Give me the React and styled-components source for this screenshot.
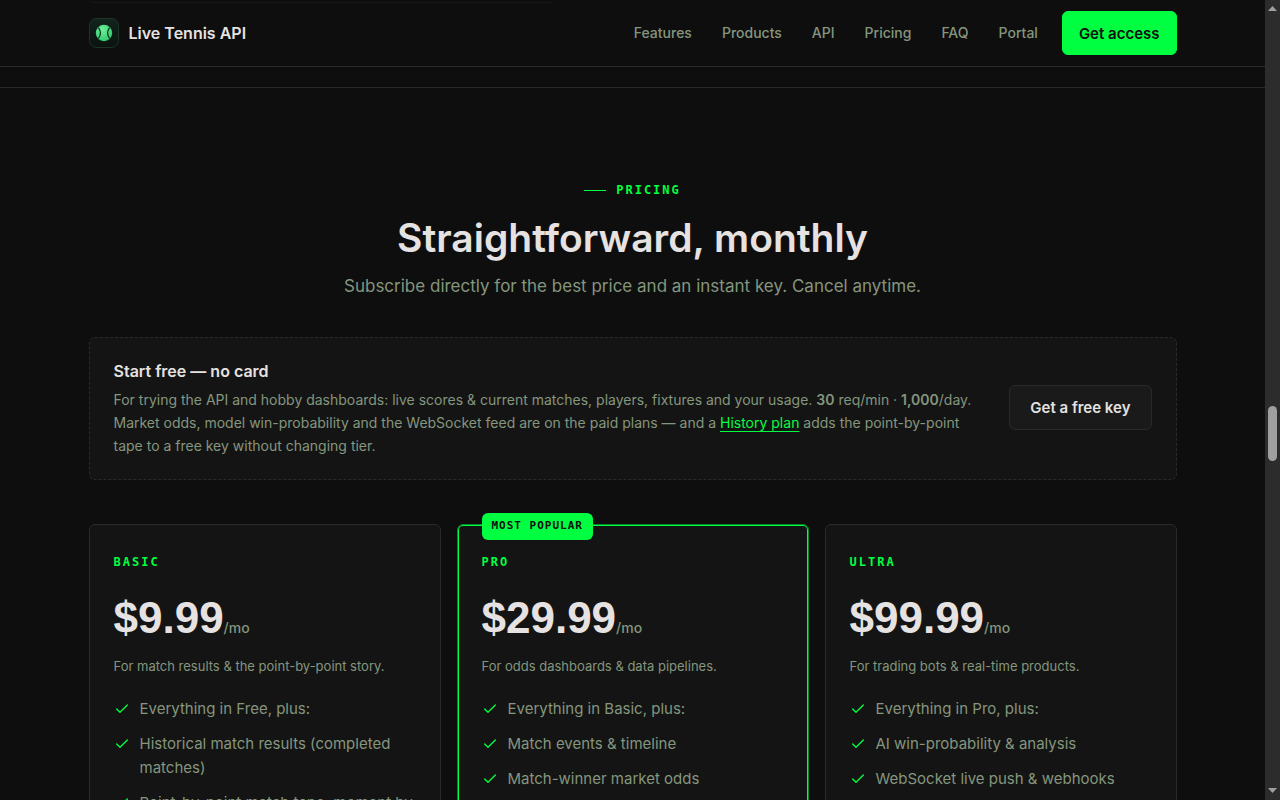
import React from 'react'
import styled, { createGlobalStyle } from 'styled-components'
import { Check } from 'lucide-react'

const GlobalStyle = createGlobalStyle`
  * {
    box-sizing: border-box;
  }

  body {
    margin: 0;
    background: #0e0e0e;
    color: #e5e2e1;
    font-family: Inter, sans-serif;
    font-size: 16px;
    line-height: 24px;
  }

  h1, h2, h3, p, ul {
    margin: 0;
    padding: 0;
  }
`

const mono = '"DejaVu Sans Mono", monospace'

const Window = styled.div`
  display: flex;
  height: 100vh;
  overflow: hidden;
`

const Page = styled.div`
  flex: 1;
  min-width: 0;
  overflow: hidden;
`

const Container = styled.div`
  max-width: 1136px;
  margin: 0 auto;
  padding: 0 24px;
`

const Header = styled.header`
  border-bottom: 1px solid #2a2a2a;
`

const HeaderRow = styled(Container)`
  position: relative;
  display: flex;
  align-items: center;
  justify-content: space-between;
  height: 66px;
`

/* bottom edge of the panel that has scrolled under the header */
const ScrolledPanel = styled.div`
  position: absolute;
  top: 0;
  left: 24px;
  width: 41%;
  height: 3px;
  border-bottom: 1px solid #171717;
  border-radius: 0 0 6px 6px;
`

const Brand = styled.a`
  display: flex;
  align-items: center;
  gap: 10px;
  color: #e5e2e1;
  font-size: 16px;
  font-weight: 600;
  text-decoration: none;
`

const Nav = styled.nav`
  display: flex;
  align-items: center;
  gap: 24px;
`

const NavLinks = styled.div`
  display: flex;
  gap: 30px;
`

const NavLink = styled.a`
  color: #84967e;
  font-size: 14px;
  font-weight: 500;
  text-decoration: none;
`

const ButtonLink = styled.a`
  flex-shrink: 0;
  padding: ${props => (props.$primary ? '11px 16px 9px' : '11px 20px 10px')};
  border: 1px solid ${props => (props.$primary ? '#00ff41' : '#2a2a2a')};
  border-radius: 6px;
  background: ${props => (props.$primary ? '#00ff41' : '#1a1a1a')};
  color: ${props => (props.$primary ? '#0e0e0e' : '#e5e2e1')};
  font-size: 15px;
  font-weight: 600;
  line-height: 22px;
  text-decoration: none;
`

const Strip = styled.div`
  height: 21px;
  border-bottom: 1px solid #2a2a2a;
`

const Pricing = styled.section`
  padding: 90px 0;
`

const SectionHead = styled.div`
  display: flex;
  flex-direction: column;
  align-items: center;
  margin-bottom: 37px;
  text-align: center;
`

const Label = styled.p`
  display: flex;
  align-items: center;
  gap: 10px;
  color: #00ff41;
  font-family: ${mono};
  font-size: 12px;
  font-weight: 700;
  letter-spacing: 2px;
  text-transform: uppercase;
`

const Eyebrow = styled(Label)`
  &::before {
    content: '';
    width: 22px;
    height: 1px;
    background: #00ff41;
  }
`

const Title = styled.h2`
  margin: 13px 0 11px;
  font-size: 39px;
  font-weight: 600;
  line-height: 46px;
`

const Subtitle = styled.p`
  color: #84967e;
  font-size: 17px;
  line-height: 28px;
`

const FreeCard = styled.div`
  display: flex;
  align-items: center;
  justify-content: space-between;
  gap: 24px;
  margin-bottom: 44px;
  padding: 20px 24px 22px;
  border: 1px dashed #2a2a2a;
  border-radius: 6px;
  background: #141414;
`

const FreeTitle = styled.h3`
  margin-bottom: 3px;
  font-size: 16px;
  font-weight: 600;
  line-height: 27px;
`

const FreeText = styled.p`
  color: #84967e;
  font-size: 14px;
  line-height: 23px;

  strong {
    font-weight: 600;
  }

  a {
    color: #00ff41;
    text-underline-offset: 3px;
  }
`

const Plans = styled.div`
  display: grid;
  grid-template-columns: repeat(3, minmax(0, 1fr));
  gap: 16px;
`

const PlanCard = styled.article`
  position: relative;
  padding: 25px 24px;
  border: 1px solid ${props => (props.$featured ? '#07872a' : '#2a2a2a')};
  border-radius: 6px;
  background: #141414;
  box-shadow: ${props => (props.$featured ? 'inset 0 0 0 1px #00ff41' : 'none')};
`

const Badge = styled.span`
  position: absolute;
  top: -12px;
  left: 24px;
  padding: 1px 10px 3px;
  border-radius: 6px;
  background: #00ff41;
  color: #0e0e0e;
  font-family: ${mono};
  font-size: 11px;
  font-weight: 700;
  line-height: 23px;
  letter-spacing: 1px;
`

const Price = styled.p`
  margin: 17px 0 9px;
  font-family: "Liberation Sans", Arial, sans-serif;
  font-size: 44px;
  font-weight: 700;
  line-height: 54px;

  span {
    color: #84967e;
    font-family: Inter, sans-serif;
    font-size: 14px;
    font-weight: 500;
    line-height: 14px;
  }
`

const PlanText = styled.p`
  color: #84967e;
  font-size: 13px;
`

const Features = styled.ul`
  display: flex;
  flex-direction: column;
  gap: 11px;
  margin-top: 19px;
  list-style: none;
`

const Feature = styled.li`
  display: flex;
  gap: 10px;
  color: #84967e;
  font-size: 15px;

  svg {
    flex-shrink: 0;
    margin-top: 4px;
    color: #00ff41;
  }
`

const ScrollTrack = styled.div`
  display: flex;
  flex-direction: column;
  align-items: center;
  justify-content: space-between;
  width: 15px;
  padding: 6px 0 7px;
  background: #2c2c2c;
`

const ScrollThumb = styled.div`
  width: 9px;
  height: 55px;
  margin-top: 68px;
  border-radius: 5px;
  background: #9f9f9f;
`

const links = ['Features', 'Products', 'API', 'Pricing', 'FAQ', 'Portal']

const plans = [
  {
    name: 'Basic',
    price: '$9.99',
    text: 'For match results & the point-by-point story.',
    features: [
      'Everything in Free, plus:',
      'Historical match results (completed matches)',
      'Point-by-point match tape, moment by moment',
    ],
  },
  {
    name: 'Pro',
    price: '$29.99',
    featured: true,
    text: 'For odds dashboards & data pipelines.',
    features: ['Everything in Basic, plus:', 'Match events & timeline', 'Match-winner market odds'],
  },
  {
    name: 'Ultra',
    price: '$99.99',
    text: 'For trading bots & real-time products.',
    features: ['Everything in Pro, plus:', 'AI win-probability & analysis', 'WebSocket live push & webhooks'],
  },
]

const Logo = () => (
  <svg width="30" height="30" viewBox="0 0 30 30" aria-hidden="true">
    <defs>
      <linearGradient id="tile" x1="0" y1="0" x2="0" y2="1">
        <stop offset="0" stopColor="#12241b" />
        <stop offset="1" stopColor="#0a130f" />
      </linearGradient>
      <radialGradient id="ball" cx="0.4" cy="0.3" r="0.8">
        <stop offset="0" stopColor="#6cf09a" />
        <stop offset="1" stopColor="#2cc468" />
      </radialGradient>
    </defs>
    <rect x="0.5" y="0.5" width="29" height="29" rx="7" fill="url(#tile)" stroke="#1c3627" />
    <circle cx="15" cy="15" r="8.2" fill="url(#ball)" />
    <path d="M9.4 9.6Q13.4 15 9.4 20.4M20.6 9.6Q16.6 15 20.6 20.4" fill="none" stroke="#0c2a18" strokeWidth="1.2" />
  </svg>
)

const Scrollbar = () => (
  <ScrollTrack aria-hidden="true">
    <svg width="9" height="5" viewBox="0 0 9 5">
      <path d="M4.5 0 9 5H0z" fill="#9f9f9f" />
    </svg>
    <ScrollThumb />
    <svg width="9" height="5" viewBox="0 0 9 5">
      <path d="M0 0H9L4.5 5z" fill="#9f9f9f" />
    </svg>
  </ScrollTrack>
)

const Plan = ({ plan }) => (
  <PlanCard $featured={plan.featured}>
    {plan.featured && <Badge>MOST POPULAR</Badge>}
    <Label as="h3">{plan.name}</Label>
    <Price>
      {plan.price}
      <span>/mo</span>
    </Price>
    <PlanText>{plan.text}</PlanText>
    <Features>
      {plan.features.map(feature => (
        <Feature key={feature}>
          <Check size={16} />
          {feature}
        </Feature>
      ))}
    </Features>
  </PlanCard>
)

const App = () => (
  <Window>
    <GlobalStyle />
    <Page>
      <Header>
        <HeaderRow>
          <ScrolledPanel />
          <Brand href="#top">
            <Logo />
            Live Tennis API
          </Brand>
          <Nav>
            <NavLinks>
              {links.map(link => (
                <NavLink key={link} href={`#${link.toLowerCase()}`}>{link}</NavLink>
              ))}
            </NavLinks>
            <ButtonLink $primary href="#access">Get access</ButtonLink>
          </Nav>
        </HeaderRow>
      </Header>
      <Strip />
      <Pricing id="pricing">
        <Container>
          <SectionHead>
            <Eyebrow>Pricing</Eyebrow>
            <Title>Straightforward, monthly</Title>
            <Subtitle>Subscribe directly for the best price and an instant key. Cancel anytime.</Subtitle>
          </SectionHead>
          <FreeCard>
            <div>
              <FreeTitle>Start free — no card</FreeTitle>
              <FreeText>
                For trying the API and hobby dashboards: live scores &amp; current matches, players, fixtures and your
                usage. <strong>30</strong> req/min · <strong>1,000</strong>/day. Market odds, model win-probability and
                the WebSocket feed are on the paid plans — and a <a href="#history">History plan</a> adds the
                point-by-point tape to a free key without changing tier.
              </FreeText>
            </div>
            <ButtonLink href="#free">Get a free key</ButtonLink>
          </FreeCard>
          <Plans>
            {plans.map(plan => (
              <Plan key={plan.name} plan={plan} />
            ))}
          </Plans>
        </Container>
      </Pricing>
    </Page>
    <Scrollbar />
  </Window>
)

export default App
